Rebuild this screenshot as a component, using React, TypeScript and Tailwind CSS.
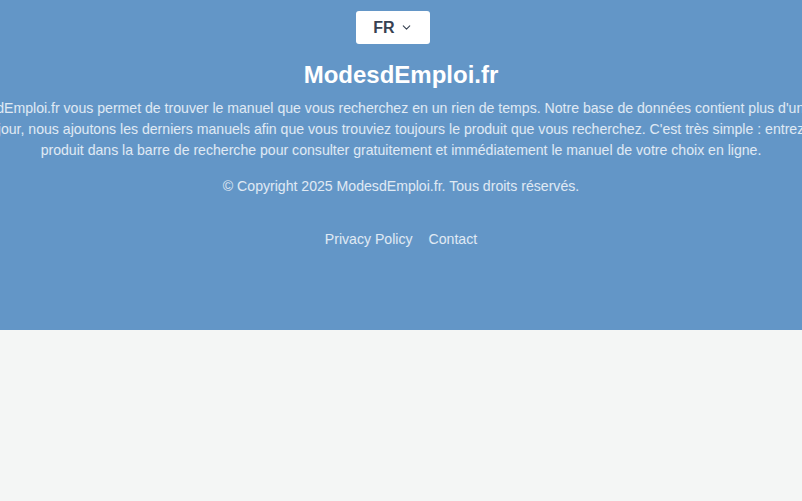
import { ChevronDown } from "lucide-react";

const FONT = "font-['Liberation_Sans','Helvetica',Arial,sans-serif]";

const LINES = [
  "ModesdEmploi.fr vous permet de trouver le manuel que vous recherchez en un rien de temps. Notre base de données contient plus d'un million",
  "jour, nous ajoutons les derniers manuels afin que vous trouviez toujours le produit que vous recherchez. C'est très simple : entrez",
  "produit dans la barre de recherche pour consulter gratuitement et immédiatement le manuel de votre choix en ligne.",
];

export default function App() {
  return (
    <div className={`min-h-[501px] w-full overflow-hidden bg-[#f4f6f5] ${FONT}`}>
      <footer className="flex flex-col items-center bg-[#6396c7] pt-[11px] pb-[80px]">
        <button className="mr-[16px] flex h-[33px] w-[74px] items-center justify-center gap-[5px] rounded-[3px] bg-white text-[16px] font-bold text-[#374151]">
          FR
          <ChevronDown size={13} strokeWidth={2} />
        </button>

        <h2 className="mt-[15px] text-[24px] leading-8 font-bold text-white">ModesdEmploi.fr</h2>

        <p className="mt-[7px] text-center text-[14.1px] leading-[21px] whitespace-nowrap text-white/80">
          {LINES.map((line, i) => (
            <span key={i}>
              {line}
              {i < LINES.length - 1 && <br />}
            </span>
          ))}
        </p>

        <p className="mt-[15px] text-[14.1px] leading-[21px] text-white/80">
          © Copyright 2025 ModesdEmploi.fr. Tous droits réservés.
        </p>

        <nav className="mt-[32px] flex gap-4 text-[14.1px] leading-[21px] text-white/80">
          <a href="#">Privacy Policy</a>
          <a href="#">Contact</a>
        </nav>
      </footer>
    </div>
  );
}
